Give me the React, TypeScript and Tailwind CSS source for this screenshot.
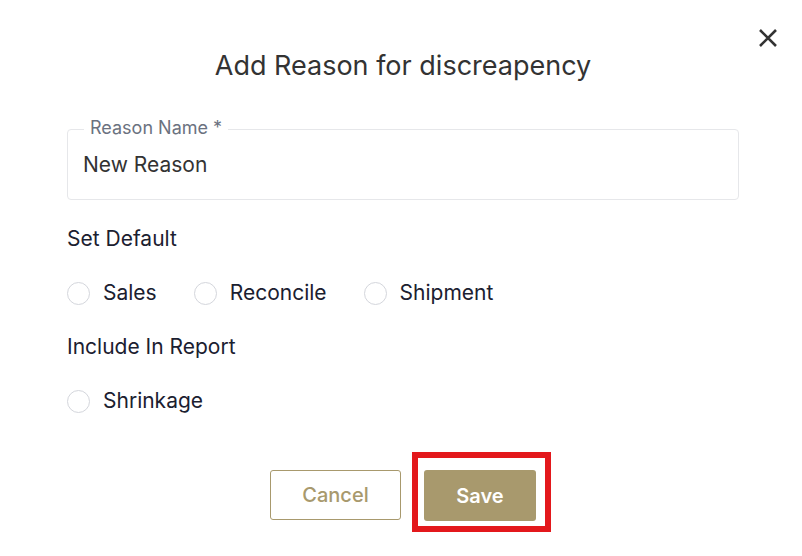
import React from "react";

function Radio({ label }: { label: string }) {
  return (
    <label className="flex items-center gap-[13px]">
      <span className="block w-[23px] h-[23px] rounded-full border border-[#d4d6dc] bg-white" />
      <span className="text-[21px] leading-[28px] text-[#1b2030]">{label}</span>
    </label>
  );
}

export default function App() {
  return (
    <div
      className="relative w-[802px] h-[556px] bg-white overflow-hidden"
      style={{ fontFamily: "Inter, 'Noto Sans', sans-serif" }}
    >
      <button className="absolute left-[756px] top-[26px] w-[24px] h-[24px] flex items-center justify-center text-[#333]">
        <svg width="22" height="22" viewBox="0 0 22 22" fill="none" stroke="#333" strokeWidth="2.6" strokeLinecap="butt">
          <path d="M3 3 L19 19 M19 3 L3 19" />
        </svg>
      </button>

      <div className="px-[67px] pt-[49px] flex flex-col">
        <h2 className="text-center text-[27px] leading-[34px] font-normal text-[#333333] pl-[4px]">
          Add Reason for discreapency
        </h2>

        <div className="relative mt-[46px] h-[71px] w-[672px] rounded-[4px] border border-[#e6e7ea] flex items-center px-[15px]">
          <span className="absolute left-[16px] top-[-13px] px-[6px] bg-white text-[18px] leading-[22px] text-[#6b7280]">
            Reason Name *
          </span>
          <span className="text-[21px] leading-[28px] text-[#333333]">New Reason</span>
        </div>

        <div className="mt-[25px] text-[21px] leading-[28px] text-[#1b2030]">Set Default</div>
        <div className="mt-[26px] flex items-center gap-[37px]">
          <Radio label="Sales" />
          <Radio label="Reconcile" />
          <Radio label="Shipment" />
        </div>

        <div className="mt-[26px] text-[21px] leading-[28px] text-[#1b2030]">Include In Report</div>
        <div className="mt-[26px] flex items-center">
          <Radio label="Shrinkage" />
        </div>

        <div className="mt-[55px] flex justify-center gap-[23px] pl-[4px]">
          <button className="w-[131px] h-[50px] rounded-[3px] border border-[#a8996d] bg-white text-[20px] font-medium text-[#a8996d]">
            Cancel
          </button>
          <button className="relative w-[112px] h-[51px] rounded-[3px] bg-[#a8996d] text-[20px] font-semibold text-white">
            Save
            <span className="pointer-events-none absolute left-[-12px] top-[-18px] w-[139px] h-[80px] border-[6px] border-[#e3181c]" />
          </button>
        </div>
      </div>
    </div>
  );
}
